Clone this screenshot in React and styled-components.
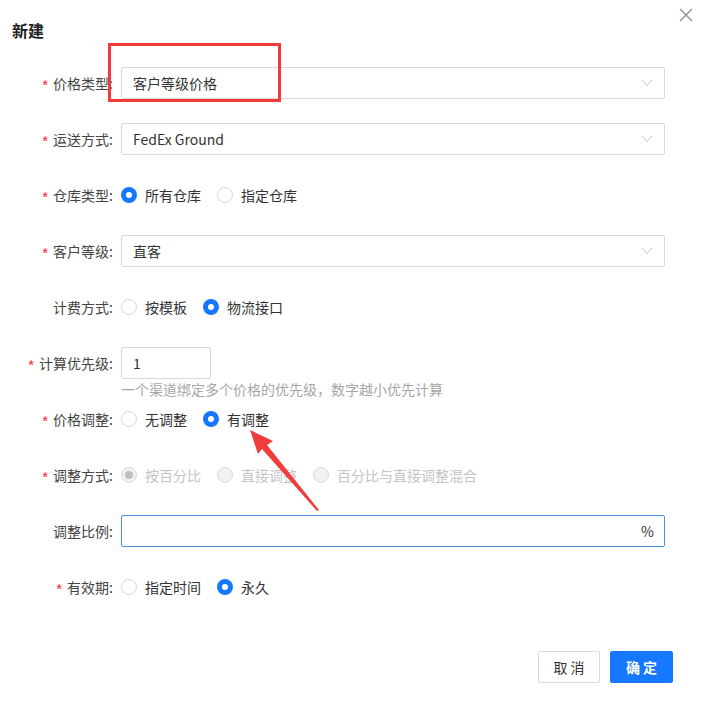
import React from "react";
import styled, { createGlobalStyle } from "styled-components";

const GlobalStyle = createGlobalStyle`
  html, body { margin: 0; padding: 0; background: #fff; }
  body {
    font-family: "Noto Sans CJK SC", "Noto Sans", sans-serif;
    font-size: 14px;
    color: #333;
  }
`;

const Dialog = styled.div`
  position: relative;
  width: 705px;
  height: 704px;
  box-sizing: border-box;
  padding: 20px 40px 0 0;
  display: flex;
  flex-direction: column;
`;

const Title = styled.div`
  padding-left: 12px;
  font-size: 16px;
  font-weight: 700;
  line-height: 20px;
  color: #222;
  margin-bottom: 27px;
`;

const Close = styled.svg`
  position: absolute;
  top: 8px;
  right: 12px;
`;

const Form = styled.div`
  display: flex;
  flex-direction: column;
`;

const Row = styled.div`
  display: flex;
  align-items: flex-start;
  margin-bottom: ${(p) => (p.$tight ? "4px" : "24px")};
`;

const Label = styled.div`
  width: 113px;
  height: 32px;
  flex-shrink: 0;
  margin-right: 8px;
  display: flex;
  align-items: center;
  justify-content: flex-end;
  color: #444;
  white-space: nowrap;
`;

const Star = styled.span`
  color: #f5222d;
  margin-right: 5px;
  font-family: "Liberation Sans", sans-serif;
  font-size: 15px;
  line-height: 1;
  padding-top: 2px;
`;

const Field = styled.div`
  flex: 1;
  display: flex;
  flex-direction: column;
`;

const Box = styled.div`
  box-sizing: border-box;
  height: 32px;
  width: ${(p) => p.$w || "100%"};
  border: 1px solid ${(p) => (p.$focus ? "#4a90e2" : "#d9d9d9")};
  border-radius: 2px;
  display: flex;
  align-items: center;
  justify-content: space-between;
  padding: 0 11px;
  color: #333;
`;

const Chevron = () => (
  <svg width="12" height="8" viewBox="0 0 12 8">
    <path d="M1 1 L6 6.5 L11 1" fill="none" stroke="#bfbfbf" strokeWidth="1" />
  </svg>
);

const Help = styled.div`
  line-height: 20px;
  color: #a6a6a6;
`;

const Radios = styled.div`
  display: flex;
  align-items: center;
  height: 32px;
`;

const RadioItem = styled.label`
  display: flex;
  align-items: center;
  margin-right: 16px;
  color: ${(p) => (p.$disabled ? "#c4c4c4" : "#333")};
`;

const Dot = styled.span`
  box-sizing: border-box;
  width: 16px;
  height: 16px;
  border-radius: 50%;
  margin-right: 8px;
  border: ${(p) => (p.$checked && !p.$disabled ? "5px solid #1677ff" : "1px solid #d9d9d9")};
  background: ${(p) => (p.$disabled ? "#f2f2f2" : "#fff")};
  display: flex;
  align-items: center;
  justify-content: center;
  &::after {
    content: "";
    display: ${(p) => (p.$checked && p.$disabled ? "block" : "none")};
    width: 8px;
    height: 8px;
    border-radius: 50%;
    background: #bfbfbf;
  }
`;

const Footer = styled.div`
  margin-top: auto;
  margin-bottom: 21px;
  margin-right: -8px;
  display: flex;
  justify-content: flex-end;
  gap: 10px;
`;

const Button = styled.button`
  box-sizing: border-box;
  height: 32px;
  width: ${(p) => (p.$primary ? "63px" : "62px")};
  border-radius: 2px;
  border: 1px solid ${(p) => (p.$primary ? "#1677ff" : "#d9d9d9")};
  background: ${(p) => (p.$primary ? "#1677ff" : "#fff")};
  color: ${(p) => (p.$primary ? "#fff" : "#333")};
  font-family: inherit;
  font-size: 14px;
  font-weight: ${(p) => (p.$primary ? 700 : 400)};
  letter-spacing: 3px;
  padding: 0 0 0 3px;
`;

const Highlight = styled.div`
  position: absolute;
  left: 108px;
  top: 43px;
  width: 173px;
  height: 59px;
  box-sizing: border-box;
  border: 3px solid #f23a3a;
`;

const Arrow = styled.svg`
  position: absolute;
  left: 0;
  top: 0;
  pointer-events: none;
`;

const Radio = ({ checked, disabled, children }) => (
  <RadioItem $disabled={disabled}>
    <Dot $checked={checked} $disabled={disabled} />
    {children}
  </RadioItem>
);

const FormRow = ({ label, required, tight, children }) => (
  <Row $tight={tight}>
    <Label>
      {required && <Star>*</Star>}
      {label}:
    </Label>
    <Field>{children}</Field>
  </Row>
);

export default function App() {
  return (
    <>
      <GlobalStyle />
      <Dialog>
        <Title>新建</Title>
        <Close width="14" height="14" viewBox="0 0 14 14">
          <path d="M1 1 L13 13 M13 1 L1 13" stroke="#8c8c8c" strokeWidth="1.3" />
        </Close>
        <Form>
          <FormRow label="价格类型" required>
            <Box>客户等级价格<Chevron /></Box>
          </FormRow>
          <FormRow label="运送方式" required>
            <Box>FedEx Ground<Chevron /></Box>
          </FormRow>
          <FormRow label="仓库类型" required>
            <Radios>
              <Radio checked>所有仓库</Radio>
              <Radio>指定仓库</Radio>
            </Radios>
          </FormRow>
          <FormRow label="客户等级" required>
            <Box>直客<Chevron /></Box>
          </FormRow>
          <FormRow label="计费方式">
            <Radios>
              <Radio>按模板</Radio>
              <Radio checked>物流接口</Radio>
            </Radios>
          </FormRow>
          <FormRow label="计算优先级" required tight>
            <Box $w="90px">1</Box>
            <Help>一个渠道绑定多个价格的优先级，数字越小优先计算</Help>
          </FormRow>
          <FormRow label="价格调整" required>
            <Radios>
              <Radio>无调整</Radio>
              <Radio checked>有调整</Radio>
            </Radios>
          </FormRow>
          <FormRow label="调整方式" required>
            <Radios>
              <Radio checked disabled>按百分比</Radio>
              <Radio disabled>直接调整</Radio>
              <Radio disabled>百分比与直接调整混合</Radio>
            </Radios>
          </FormRow>
          <FormRow label="调整比例">
            <Box $focus>
              <span />
              <span style={{ marginRight: -1 }}>%</span>
            </Box>
          </FormRow>
          <FormRow label="有效期" required>
            <Radios>
              <Radio>指定时间</Radio>
              <Radio checked>永久</Radio>
            </Radios>
          </FormRow>
        </Form>
        <Footer>
          <Button>取消</Button>
          <Button $primary>确定</Button>
        </Footer>
        <Highlight />
        <Arrow width="705" height="704" viewBox="0 0 705 704">
          <polygon
            points="250,430 273,441 267,445 319,510 317,511 262,449 258,454"
            fill="#f03c3c"
          />
        </Arrow>
      </Dialog>
    </>
  );
}
